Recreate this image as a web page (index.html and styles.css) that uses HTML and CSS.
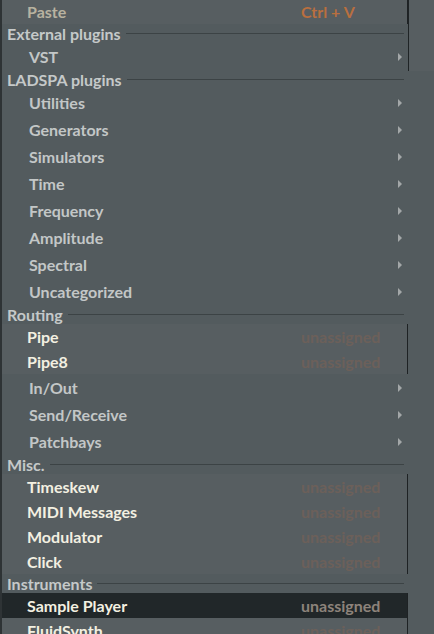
FILE: index.html
```html
<!DOCTYPE html>
<html lang="en">
<head>
    <meta charset="UTF-8">
    <meta name="viewport" content="width=device-width, initial-scale=1.0">
    <title>Menu</title>
    <link rel="stylesheet" href="styles.css">
</head>
<body>
    <div class="screen">
        <div class="topstrip"></div>
        <div class="menu">
            <div class="block first">
                <div class="item disabled"><span class="label">Paste</span><span class="key orange">Ctrl + V</span></div>
            </div>
            <div class="head"><span>External plugins</span><i></i></div>
            <div class="sub"><span>VST</span><b class="arrow"></b></div>

            <div class="head"><span>LADSPA plugins</span><i></i></div>
            <div class="sub"><span>Utilities</span><b class="arrow"></b></div>
            <div class="sub"><span>Generators</span><b class="arrow"></b></div>
            <div class="sub"><span>Simulators</span><b class="arrow"></b></div>
            <div class="sub"><span>Time</span><b class="arrow"></b></div>
            <div class="sub"><span>Frequency</span><b class="arrow"></b></div>
            <div class="sub"><span>Amplitude</span><b class="arrow"></b></div>
            <div class="sub"><span>Spectral</span><b class="arrow"></b></div>
            <div class="sub"><span>Uncategorized</span><b class="arrow"></b></div>

            <div class="head"><span>Routing</span><i></i></div>
            <div class="block">
                <div class="item"><span class="label">Pipe</span><span class="key">unassigned</span></div>
                <div class="item"><span class="label">Pipe8</span><span class="key">unassigned</span></div>
            </div>
            <div class="sub"><span>In/Out</span><b class="arrow"></b></div>
            <div class="sub"><span>Send/Receive</span><b class="arrow"></b></div>
            <div class="sub"><span>Patchbays</span><b class="arrow"></b></div>

            <div class="head"><span>Misc.</span><i></i></div>
            <div class="block">
                <div class="item"><span class="label">Timeskew</span><span class="key">unassigned</span></div>
                <div class="item"><span class="label">MIDI Messages</span><span class="key">unassigned</span></div>
                <div class="item"><span class="label">Modulator</span><span class="key">unassigned</span></div>
                <div class="item"><span class="label">Click</span><span class="key">unassigned</span></div>
            </div>

            <div class="head"><span>Instruments</span><i></i></div>
            <div class="block">
                <div class="item active"><span class="label">Sample Player</span><span class="key">unassigned</span></div>
                <div class="item"><span class="label">FluidSynth</span><span class="key">unassigned</span></div>
            </div>
        </div>
    </div>
</body>
</html>
```

FILE: styles.css
```css
*{
    box-sizing: border-box;
}
body{
    margin: 0;
    background-color: #535b5e;
    font-family: 'Lato', 'Noto Sans', sans-serif;
    font-weight: bold;
    font-size: 16px;
}
.screen{
    position: relative;
    width: 434px;
    height: 634px;
    overflow: hidden;
    border-left: 2px solid #2e3335;
}
/* leftover of the parent submenu frame, on the right */
.topstrip{
    position: absolute;
    left: 406px;
    top: 0;
    width: 26px;
    height: 71px;
    background-color: #575e61;
    border-left: 1px solid #1f2426;
}
.menu{
    position: relative;
    width: 406px;
}
.head{
    display: flex;
    align-items: center;
    height: 19px;
    padding-left: 5px;
    padding-right: 4px;
    color: #c5c9c9;
    line-height: 19px;
}
.head i{
    flex: 1;
    height: 1px;
    margin-left: 5px;
    background-color: #3c4345;
}
.sub{
    display: flex;
    align-items: center;
    justify-content: space-between;
    height: 27px;
    padding-left: 27px;
    padding-right: 6px;
    color: #c3c7c7;
}
.arrow{
    width: 0;
    height: 0;
    border-top: 4px solid transparent;
    border-bottom: 4px solid transparent;
    border-left: 4px solid #a3a7a8;
}
.block{
    background-color: #575e61;
    border-right: 1px solid #1e2224;
}
.block.first{
    margin-top: -1px;
}
.item{
    display: flex;
    align-items: center;
    height: 25px;
    padding-left: 25px;
    color: #f3f0e1;
}
.item .label{
    width: 274px;
}
.key{
    color: #6c605a;
}
.orange{
    color: #b96f3f;
}
.disabled{
    color: #b8b2a0;
}
.active{
    background-color: #212729;
}
.active .key{
    color: #8d837b;
}
```
